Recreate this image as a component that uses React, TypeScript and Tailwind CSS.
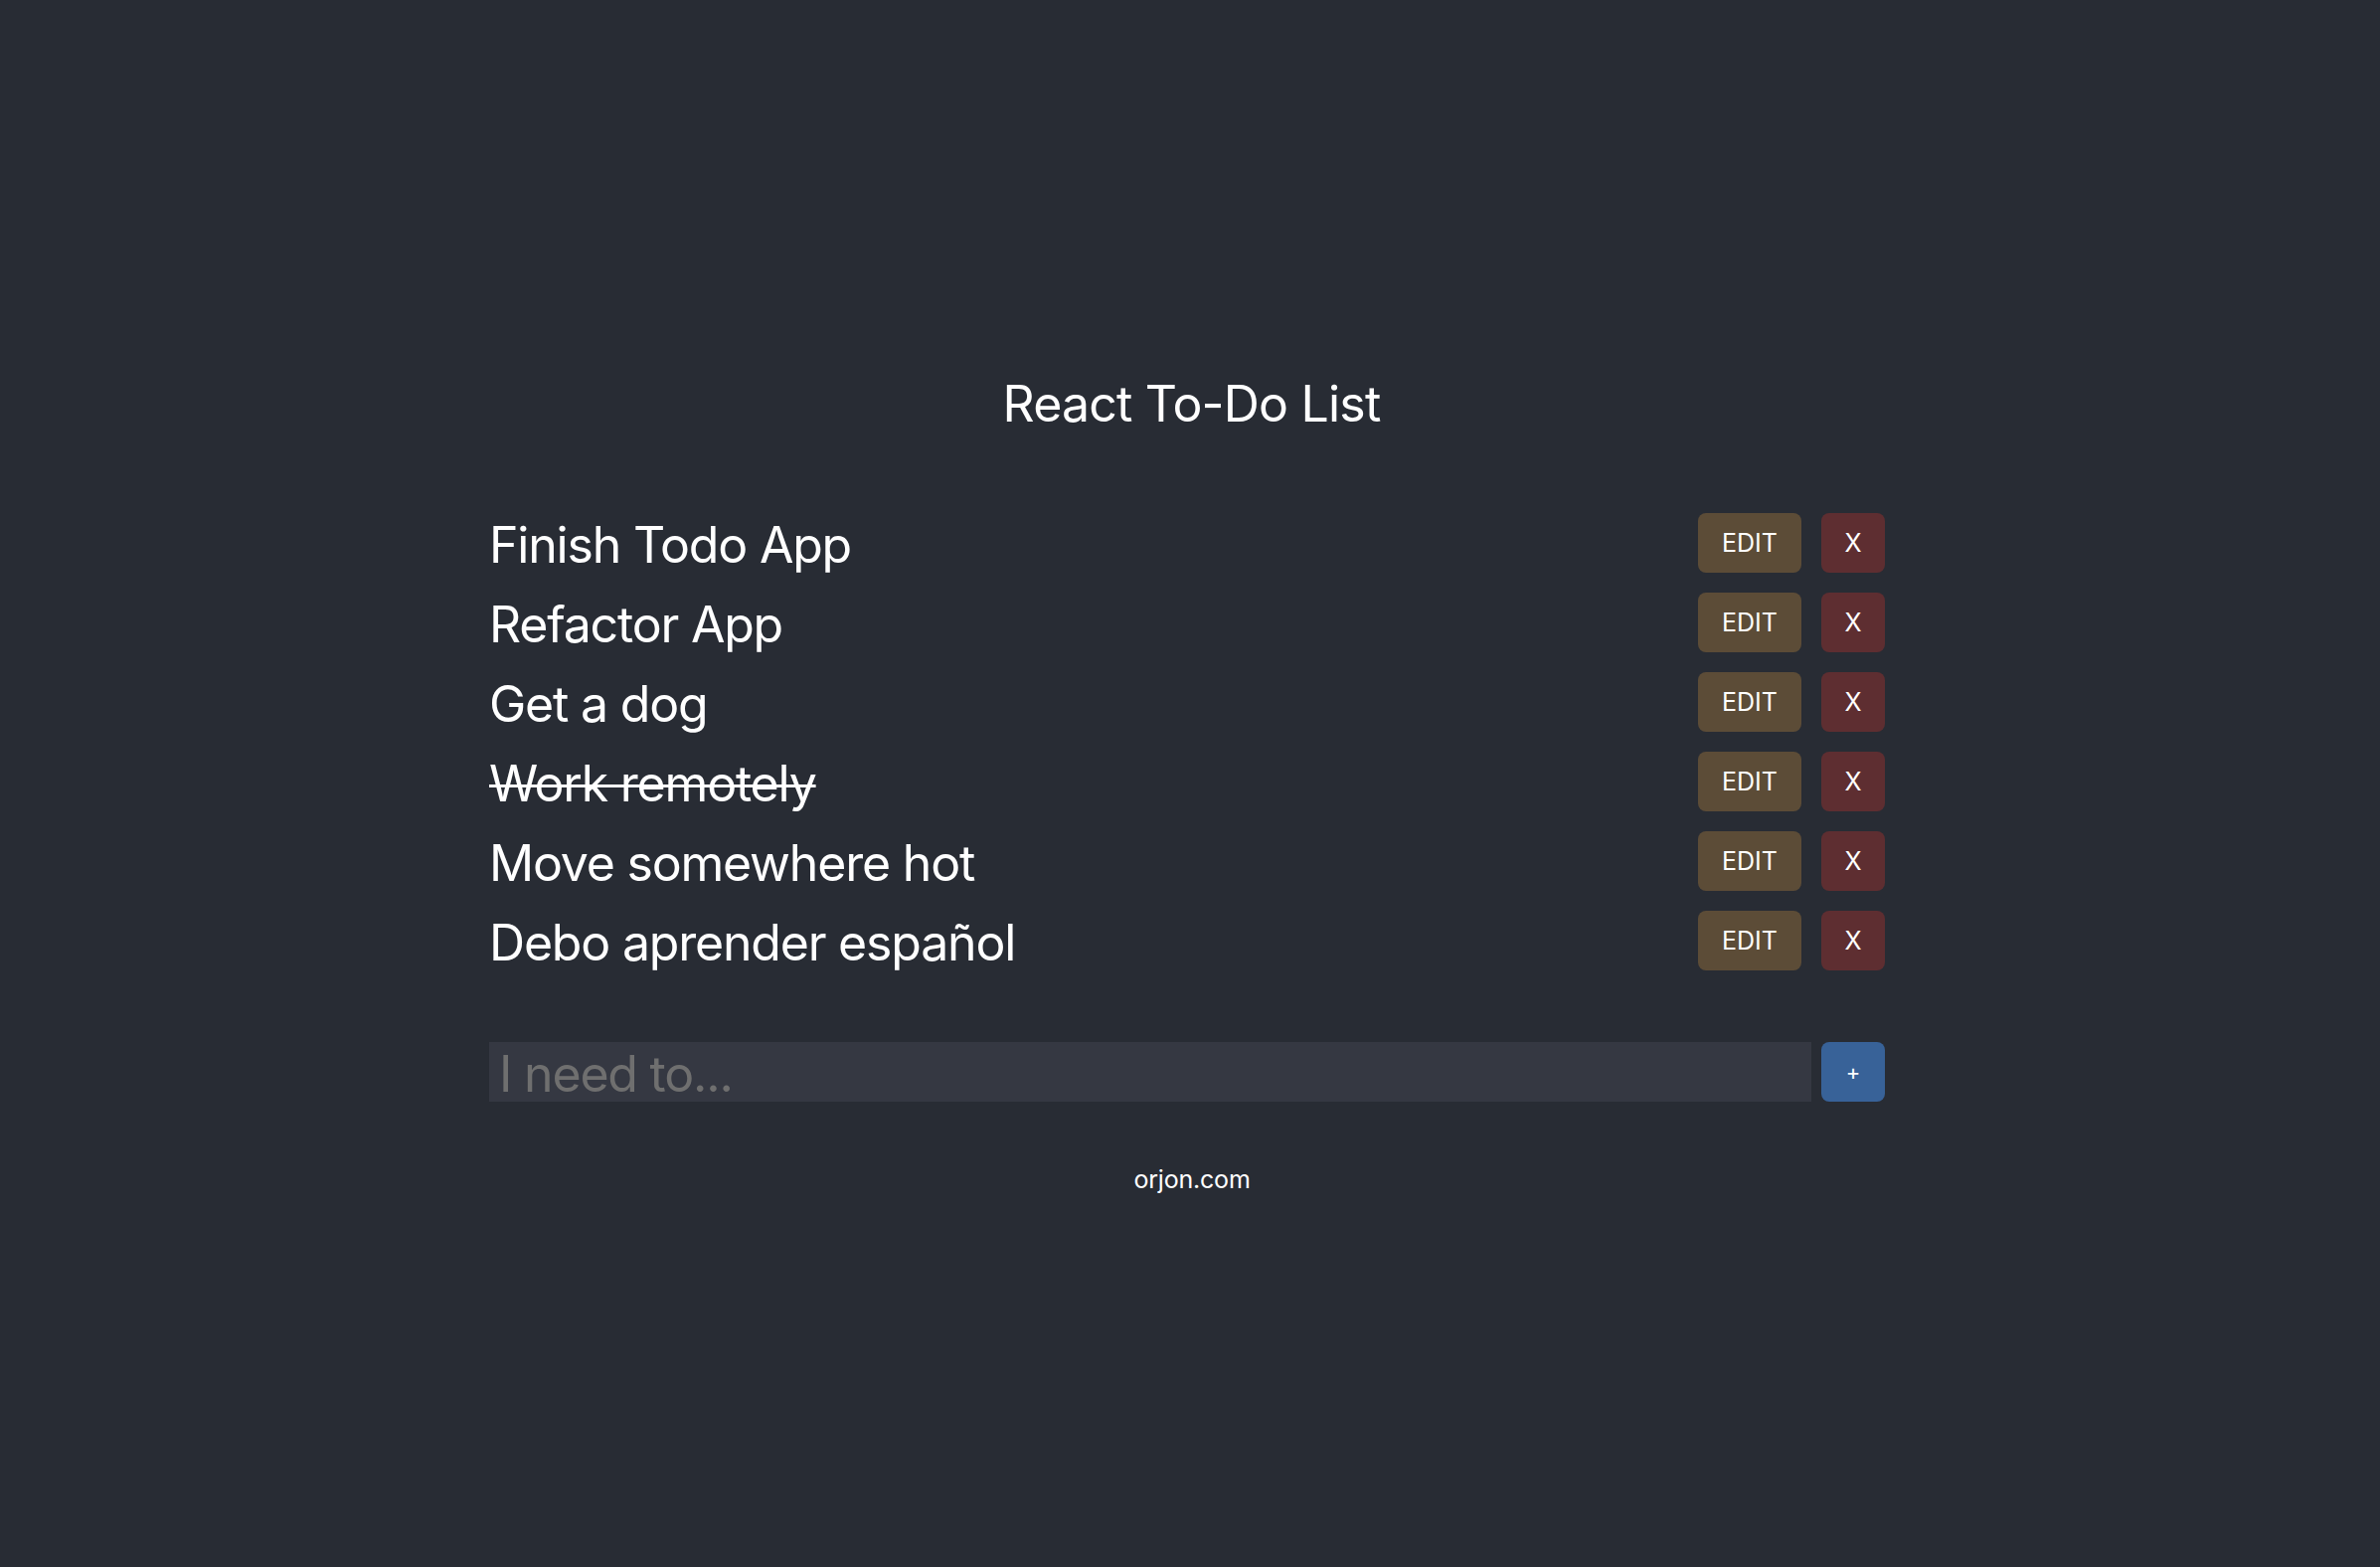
import { useState } from "react";

type Todo = { id: number; text: string; done: boolean };

const initial: Todo[] = [
  { id: 1, text: "Finish Todo App", done: false },
  { id: 2, text: "Refactor App", done: false },
  { id: 3, text: "Get a dog", done: false },
  { id: 4, text: "Work remotely", done: true },
  { id: 5, text: "Move somewhere hot", done: false },
  { id: 6, text: "Debo aprender español", done: false },
];

const TodoRow = ({ todo }: { todo: Todo }) => {
  return (
    <li className="flex h-[60px] items-center">
      <span
        className={`flex-1 pt-[5px] text-[50px] leading-[55px] tracking-[-1.2px] text-white ${
          todo.done ? "line-through decoration-[3px]" : ""
        }`}
      >
        {todo.text}
      </span>
      <button className="h-[60px] w-[104px] rounded-[8px] bg-[#5c4c37] pt-[2px] text-[25px] text-white">
        EDIT
      </button>
      <button className="ml-[20px] h-[60px] w-[64px] rounded-[8px] bg-[#5e2e31] pt-[2px] text-[25px] text-white">
        X
      </button>
    </li>
  );
};

const App = () => {
  const [todos] = useState<Todo[]>(initial);
  const [value, setValue] = useState("");

  return (
    <div className="min-h-[1576px] bg-[#282c34] font-['Inter','Noto_Sans',sans-serif] text-white">
      <div className="mx-auto w-[1410px] pr-[6px] pt-[376px]">
        <h1 className="pl-[9px] text-center text-[50px] leading-[60px] font-normal tracking-[-0.8px]">
          React To-Do List
        </h1>
        <ul className="mt-[80px] flex flex-col gap-[20px]">
          {todos.map((t) => (
            <TodoRow key={t.id} todo={t} />
          ))}
        </ul>
        <form
          className="mt-[72px] flex gap-[10px]"
          onSubmit={(e) => e.preventDefault()}
        >
          <input
            value={value}
            onChange={(e) => setValue(e.target.value)}
            placeholder="I need to..."
            className="h-[60px] flex-1 bg-[#353842] px-[10px] pt-[4px] text-[50px] leading-[56px] tracking-[-1.2px] text-white outline-none placeholder:text-[#6f6f6f]"
          />
          <button
            type="submit"
            className="h-[60px] w-[64px] rounded-[8px] bg-[#386298] text-[22px] text-white"
          >
            +
          </button>
        </form>
        <p className="mt-[61px] pl-[10px] text-center text-[25px] leading-[34px] tracking-[-0.2px]">
          orjon.com
        </p>
      </div>
    </div>
  );
};

export default App;
